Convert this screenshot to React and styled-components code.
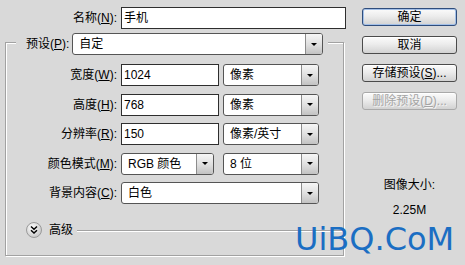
import React from 'react';
import styled, { createGlobalStyle } from 'styled-components';

const GlobalStyle = createGlobalStyle`
  html, body {
    margin: 0;
    padding: 0;
    background: #d9d9d9;
  }
  body {
    font-family: 'Liberation Sans', 'Noto Sans CJK SC', sans-serif;
    font-size: 12px;
    line-height: 14px;
    color: #000;
  }
`;

const Dialog = styled.div`
  position: relative;
  width: 465px;
  height: 265px;
  display: flex;
  align-items: flex-start;
  padding-left: 5px;
  box-sizing: border-box;
  overflow: hidden;
`;

const LeftPane = styled.div`
  width: 341px;
  display: flex;
  flex-direction: column;
`;

const NameRow = styled.div`
  display: grid;
  grid-template-columns: 112px 225px;
  column-gap: 4px;
  align-items: center;
  margin-top: 7px;
`;

const Label = styled.label`
  text-align: right;
  white-space: nowrap;
`;

const U = styled.span`
  text-decoration: underline;
`;

const TextBox = styled.div`
  box-sizing: border-box;
  width: ${p => p.$w}px;
  height: 22px;
  background: #fff;
  border: 1px solid #2e2e2e;
  padding-left: 2px;
  display: flex;
  align-items: center;
`;

const SelectBox = styled.div`
  box-sizing: border-box;
  width: ${p => p.$w}px;
  height: 22px;
  background: #fff;
  border: 1px solid #555;
  border-radius: 3px;
  display: flex;
  align-items: stretch;
  overflow: hidden;
`;

const SelectValue = styled.span`
  flex: 1;
  padding-left: 6px;
  display: flex;
  align-items: center;
  white-space: nowrap;
`;

const SelectArrow = styled.span`
  width: 16px;
  border-left: 1px solid #8c8c8c;
  background: linear-gradient(#f6f6f6, #dedede 55%, #c2c2c2);
  display: flex;
  align-items: center;
  justify-content: center;

  &::after {
    content: '';
    border-left: 3px solid transparent;
    border-right: 3px solid transparent;
    border-top: 3px solid #000;
  }
`;

const GroupBox = styled.div`
  margin-top: 13px;
  width: 339px;
  height: 214px;
  box-sizing: border-box;
  border: 1px solid #a2a2a2;
  box-shadow: inset 1px 1px 0 #fff, 1px 1px 0 #fff;
  display: flex;
  flex-direction: column;
`;

const Legend = styled.div`
  align-self: flex-start;
  margin: -10px 0 0 10px;
  padding: 0 5px 0 10px;
  background: #d9d9d9;
  display: flex;
  align-items: center;
  gap: 3px;
`;

const FieldGrid = styled.div`
  margin-top: 9px;
  display: grid;
  grid-template-columns: 111px 1fr;
  column-gap: 4px;
  row-gap: 7.5px;
  align-items: center;
`;

const Controls = styled.div`
  display: flex;
  gap: ${p => p.$gap || 4}px;
`;

const AdvancedRow = styled.div`
  margin-top: 18px;
  padding-left: 20px;
  display: flex;
  align-items: center;
  height: 16px;
`;

const AdvancedText = styled.span`
  margin-left: 7px;
`;

const Rule = styled.div`
  flex: 1;
  margin-left: 4px;
  height: 1px;
  background: #a2a2a2;
  box-shadow: 0 1px 0 #fff;
`;

const RightPane = styled.div`
  margin-left: 16px;
  width: 95px;
  padding-top: 8px;
  display: flex;
  flex-direction: column;
  gap: 10px;
`;

const Button = styled.button`
  width: 95px;
  height: 18px;
  padding: 0;
  box-sizing: border-box;
  border-radius: 3px;
  border: 1px solid ${p => (p.$primary ? '#2f4d7c' : p.disabled ? '#a9a9a9' : '#4b4b4b')};
  box-shadow: ${p => (p.$primary ? 'inset 0 0 0 1px #a3c0e8' : 'inset 0 1px 0 #fff')};
  background: linear-gradient(#fbfbfb, #ececec 45%, #d2d2d2);
  font: inherit;
  color: ${p => (p.disabled ? '#a4a4a4' : '#000')};
  text-shadow: ${p => (p.disabled ? '1px 1px 0 #f4f4f4' : 'none')};
`;

const SizeInfo = styled.div`
  margin-top: 58px;
  display: flex;
  flex-direction: column;
  align-items: center;
  gap: 11px;
`;

const Watermark = styled.div`
  position: absolute;
  left: 295px;
  top: 223px;
  font-family: 'DejaVu Sans', sans-serif;
  font-size: 32px;
  line-height: 32px;
  letter-spacing: 0;
  color: #1b6ec3;
`;

const ExpandIcon = () => (
  <svg width="16" height="16" viewBox="0 0 16 16">
    <defs>
      <radialGradient id="ex" cx="40%" cy="35%" r="70%">
        <stop offset="0" stopColor="#ffffff" />
        <stop offset="1" stopColor="#c4c4c4" />
      </radialGradient>
    </defs>
    <circle cx="8" cy="8" r="7.5" fill="url(#ex)" stroke="#9a9a9a" />
    <path d="M5 4.5 L8 7.2 L11 4.5 M5 8.3 L8 11 L11 8.3" fill="none" stroke="#000" strokeWidth="1.5" />
  </svg>
);

const Select = ({ w, children }) => (
  <SelectBox $w={w}>
    <SelectValue>{children}</SelectValue>
    <SelectArrow />
  </SelectBox>
);

const fields = [
  { label: <>宽度(<U>W</U>):</>, value: '1024', unit: '像素' },
  { label: <>高度(<U>H</U>):</>, value: '768', unit: '像素' },
  { label: <>分辨率(<U>R</U>):</>, value: '150', unit: '像素/英寸' },
];

export default function App() {
  return (
    <>
      <GlobalStyle />
      <Dialog>
        <LeftPane>
          <NameRow>
            <Label>名称(<U>N</U>):</Label>
            <TextBox $w={225}>手机</TextBox>
          </NameRow>

          <GroupBox>
            <Legend>
              <Label>预设(<U>P</U>):</Label>
              <Select w={251}>自定</Select>
            </Legend>

            <FieldGrid>
              {fields.map((f, i) => (
                <React.Fragment key={i}>
                  <Label>{f.label}</Label>
                  <Controls>
                    <TextBox $w={98}>{f.value}</TextBox>
                    <Select w={96}>{f.unit}</Select>
                  </Controls>
                </React.Fragment>
              ))}
              <Label>颜色模式(<U>M</U>):</Label>
              <Controls $gap={9}>
                <Select w={93}>RGB 颜色</Select>
                <Select w={96}>8 位</Select>
              </Controls>
              <Label>背景内容(<U>C</U>):</Label>
              <Controls>
                <Select w={198}>白色</Select>
              </Controls>
            </FieldGrid>

            <AdvancedRow>
              <ExpandIcon />
              <AdvancedText>高级</AdvancedText>
              <Rule />
            </AdvancedRow>
          </GroupBox>
        </LeftPane>

        <RightPane>
          <Button $primary>确定</Button>
          <Button>取消</Button>
          <Button>存储预设(<U>S</U>)...</Button>
          <Button disabled>删除预设(<U>D</U>)...</Button>
          <SizeInfo>
            <span>图像大小:</span>
            <span>2.25M</span>
          </SizeInfo>
        </RightPane>

        <Watermark>UiBQ.CoM</Watermark>
      </Dialog>
    </>
  );
}
